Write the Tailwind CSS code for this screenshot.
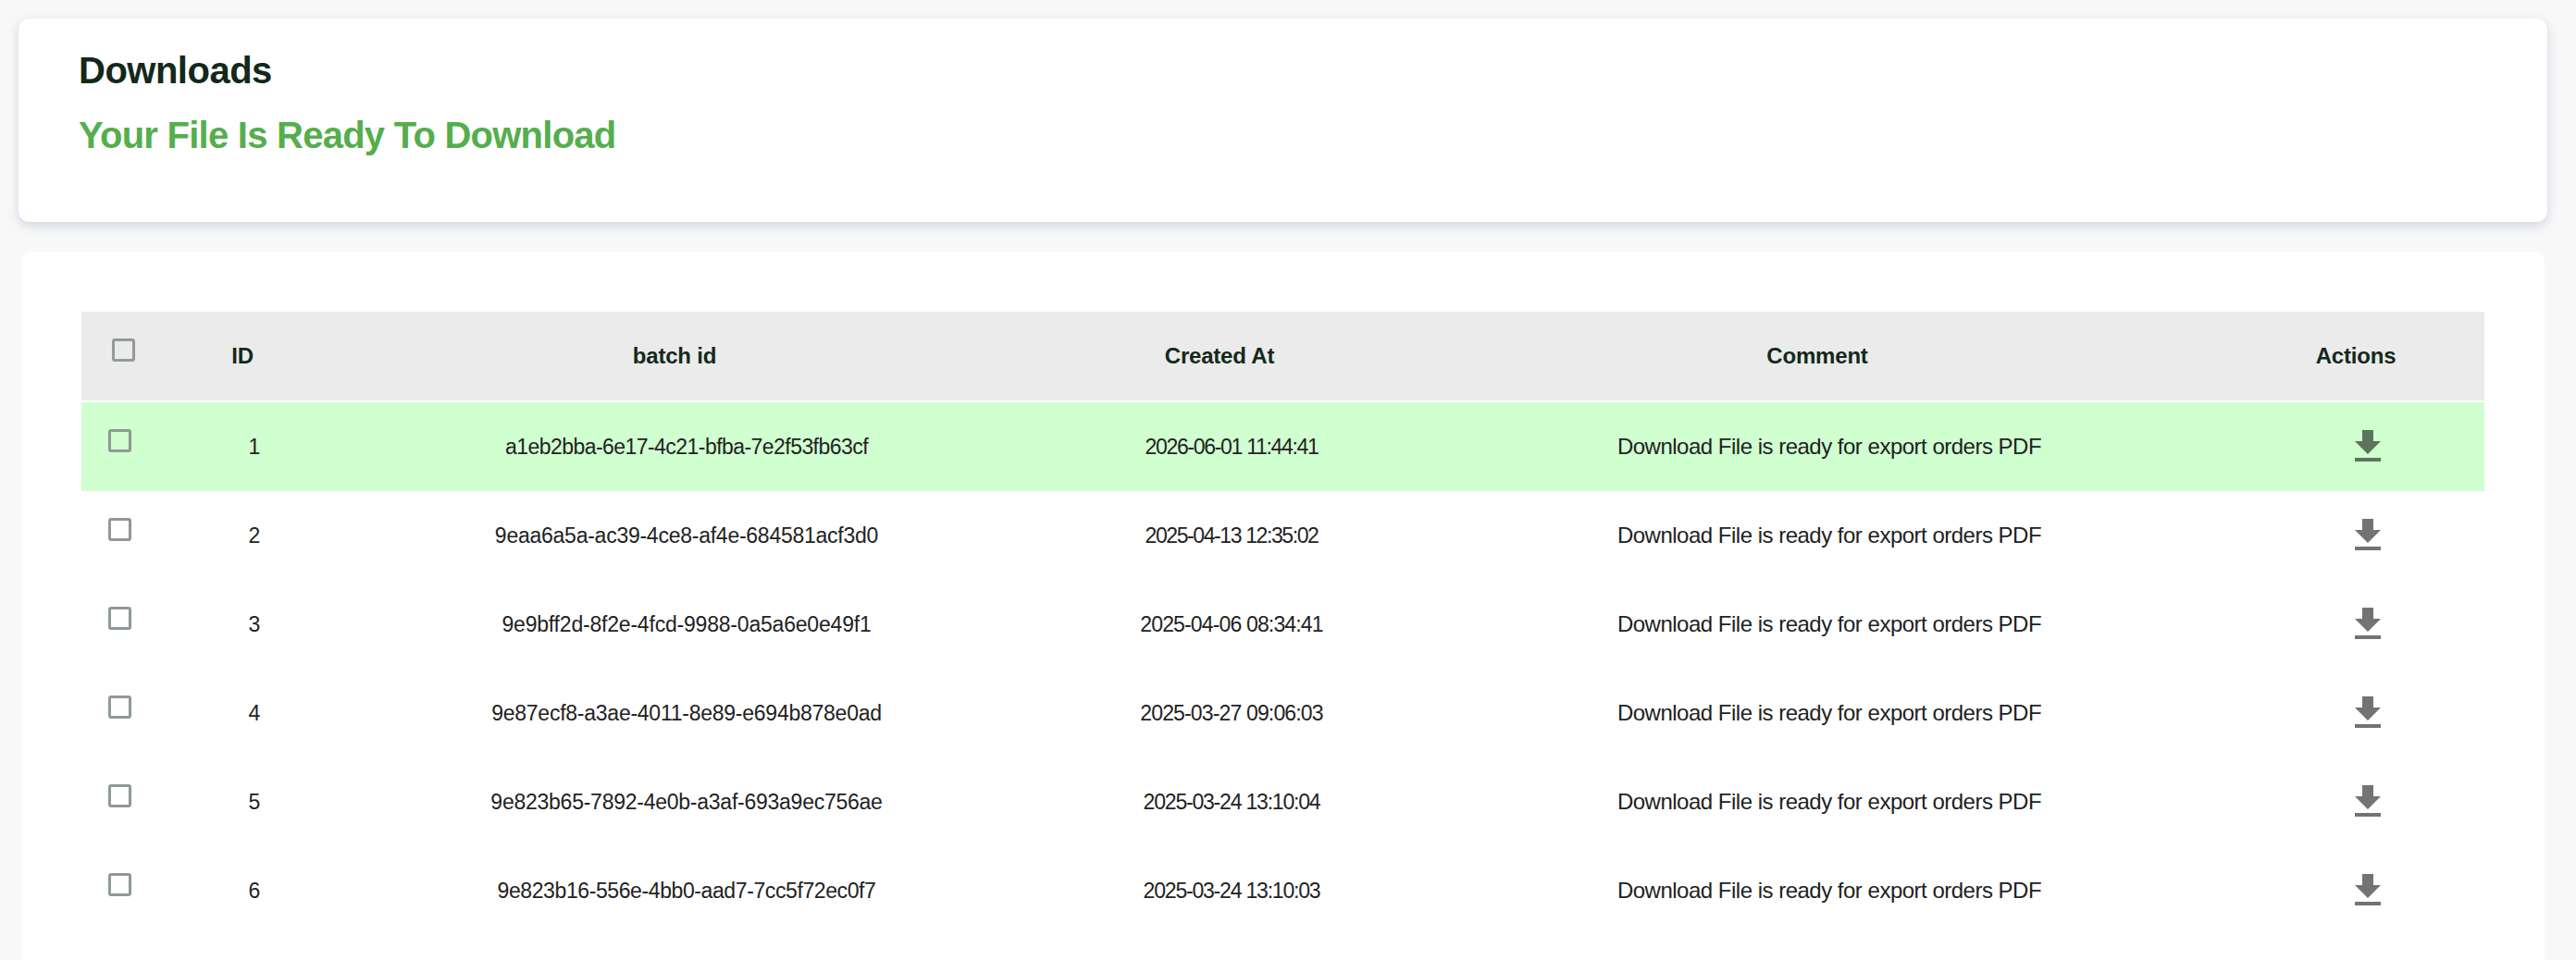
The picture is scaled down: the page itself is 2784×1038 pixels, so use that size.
<!DOCTYPE html>
<html lang="en">
<head>
  <meta charset="UTF-8" />
  <title>Downloads</title>
  <script src="https://cdn.jsdelivr.net/npm/@tailwindcss/browser@4"></script>
</head>
<body class="h-screen overflow-hidden bg-[#f8f8f8] font-['Liberation_Sans',sans-serif] text-[#13291a]">
  <!-- Header card -->
  <div class="mt-[20px] ml-[20px] mr-[31px] h-[220px] rounded-[12px] bg-white pl-[65px] pt-[34px] shadow-[0_4px_12px_rgba(100,125,165,0.28)]">
    <h1 class="text-[40px] leading-[44px] font-bold tracking-[-0.5px]">Downloads</h1>
    <p class="mt-[23px] text-[40px] leading-[50px] font-bold tracking-[-0.75px] text-[#55ae4c]">Your File Is Ready To Download</p>
  </div>

  <!-- Table card -->
  <div class="mt-[32px] ml-[23px] mr-[34px] h-[800px] rounded-[10px] bg-white pl-[65px] pr-[65px] pt-[65px]">
    <table class="w-full table-fixed border-separate border-spacing-0 text-center text-[23px]">
      <colgroup>
        <col class="w-[119px]" />
        <col class="w-[136px]" />
        <col class="w-[798px]" />
        <col class="w-[380px]" />
        <col class="w-[912px]" />
        <col class="w-[252px]" />
      </colgroup>
      <thead>
        <tr class="bg-[#ebebeb] text-[24px] tracking-[-0.2px]">
          <th class="h-[98px] border-b-[2px] border-white pl-[33px] text-left"><input type="checkbox" class="mb-[14px] block h-[25px] w-[25px] appearance-none rounded-[3px] border-[3px] border-[#929c95]" /></th>
          <th class="h-[98px] border-b-[2px] border-white pr-[26px] font-bold">ID</th>
          <th class="h-[98px] border-b-[2px] border-white pr-[26px] font-bold">batch id</th>
          <th class="h-[98px] border-b-[2px] border-white pr-[26px] font-bold">Created At</th>
          <th class="h-[98px] border-b-[2px] border-white pr-[26px] font-bold">Comment</th>
          <th class="h-[98px] border-b-[2px] border-white pr-[26px] font-bold">Actions</th>
        </tr>
      </thead>
      <tbody class="text-[#222222]">
        <tr class="h-[96px] bg-[#d0ffd0]">
          <td class="pl-[29px]"><input type="checkbox" class="mb-[14px] block h-[25px] w-[25px] appearance-none rounded-[3px] border-[3px] border-[#8f9a91]" /></td>
          <td>1</td>
          <td class="tracking-[-0.55px]">a1eb2bba-6e17-4c21-bfba-7e2f53fb63cf</td>
          <td class="tracking-[-1.3px]">2026-06-01 11:44:41</td>
          <td class="text-[24px] tracking-[-0.5px]">Download File is ready for export orders PDF</td>
          <td><svg class="mx-auto h-[48px] w-[48px] fill-black/55" viewBox="0 0 24 24"><path d="M19 9h-4V3H9v6H5l7 7 7-7zM5 18v2h14v-2H5z" /></svg></td>
        </tr>
        <tr class="h-[96px]">
          <td class="pl-[29px]"><input type="checkbox" class="mb-[14px] block h-[25px] w-[25px] appearance-none rounded-[3px] border-[3px] border-[#8f9a91]" /></td>
          <td>2</td>
          <td class="tracking-[-0.25px]">9eaa6a5a-ac39-4ce8-af4e-684581acf3d0</td>
          <td class="tracking-[-1.4px]">2025-04-13 12:35:02</td>
          <td class="text-[24px] tracking-[-0.5px]">Download File is ready for export orders PDF</td>
          <td><svg class="mx-auto h-[48px] w-[48px] fill-black/55" viewBox="0 0 24 24"><path d="M19 9h-4V3H9v6H5l7 7 7-7zM5 18v2h14v-2H5z" /></svg></td>
        </tr>
        <tr class="h-[96px]">
          <td class="pl-[29px]"><input type="checkbox" class="mb-[14px] block h-[25px] w-[25px] appearance-none rounded-[3px] border-[3px] border-[#8f9a91]" /></td>
          <td>3</td>
          <td class="tracking-[-0.2px]">9e9bff2d-8f2e-4fcd-9988-0a5a6e0e49f1</td>
          <td class="tracking-[-0.85px]">2025-04-06 08:34:41</td>
          <td class="text-[24px] tracking-[-0.5px]">Download File is ready for export orders PDF</td>
          <td><svg class="mx-auto h-[48px] w-[48px] fill-black/55" viewBox="0 0 24 24"><path d="M19 9h-4V3H9v6H5l7 7 7-7zM5 18v2h14v-2H5z" /></svg></td>
        </tr>
        <tr class="h-[96px]">
          <td class="pl-[29px]"><input type="checkbox" class="mb-[14px] block h-[25px] w-[25px] appearance-none rounded-[3px] border-[3px] border-[#8f9a91]" /></td>
          <td>4</td>
          <td class="tracking-[-0.25px]">9e87ecf8-a3ae-4011-8e89-e694b878e0ad</td>
          <td class="tracking-[-0.85px]">2025-03-27 09:06:03</td>
          <td class="text-[24px] tracking-[-0.5px]">Download File is ready for export orders PDF</td>
          <td><svg class="mx-auto h-[48px] w-[48px] fill-black/55" viewBox="0 0 24 24"><path d="M19 9h-4V3H9v6H5l7 7 7-7zM5 18v2h14v-2H5z" /></svg></td>
        </tr>
        <tr class="h-[96px]">
          <td class="pl-[29px]"><input type="checkbox" class="mb-[14px] block h-[25px] w-[25px] appearance-none rounded-[3px] border-[3px] border-[#8f9a91]" /></td>
          <td>5</td>
          <td class="tracking-[-0.25px]">9e823b65-7892-4e0b-a3af-693a9ec756ae</td>
          <td class="tracking-[-1.2px]">2025-03-24 13:10:04</td>
          <td class="text-[24px] tracking-[-0.5px]">Download File is ready for export orders PDF</td>
          <td><svg class="mx-auto h-[48px] w-[48px] fill-black/55" viewBox="0 0 24 24"><path d="M19 9h-4V3H9v6H5l7 7 7-7zM5 18v2h14v-2H5z" /></svg></td>
        </tr>
        <tr class="h-[96px]">
          <td class="pl-[29px]"><input type="checkbox" class="mb-[14px] block h-[25px] w-[25px] appearance-none rounded-[3px] border-[3px] border-[#8f9a91]" /></td>
          <td>6</td>
          <td class="tracking-[-0.4px]">9e823b16-556e-4bb0-aad7-7cc5f72ec0f7</td>
          <td class="tracking-[-1.2px]">2025-03-24 13:10:03</td>
          <td class="text-[24px] tracking-[-0.5px]">Download File is ready for export orders PDF</td>
          <td><svg class="mx-auto h-[48px] w-[48px] fill-black/55" viewBox="0 0 24 24"><path d="M19 9h-4V3H9v6H5l7 7 7-7zM5 18v2h14v-2H5z" /></svg></td>
        </tr>
      </tbody>
    </table>
  </div>
</body>
</html>
